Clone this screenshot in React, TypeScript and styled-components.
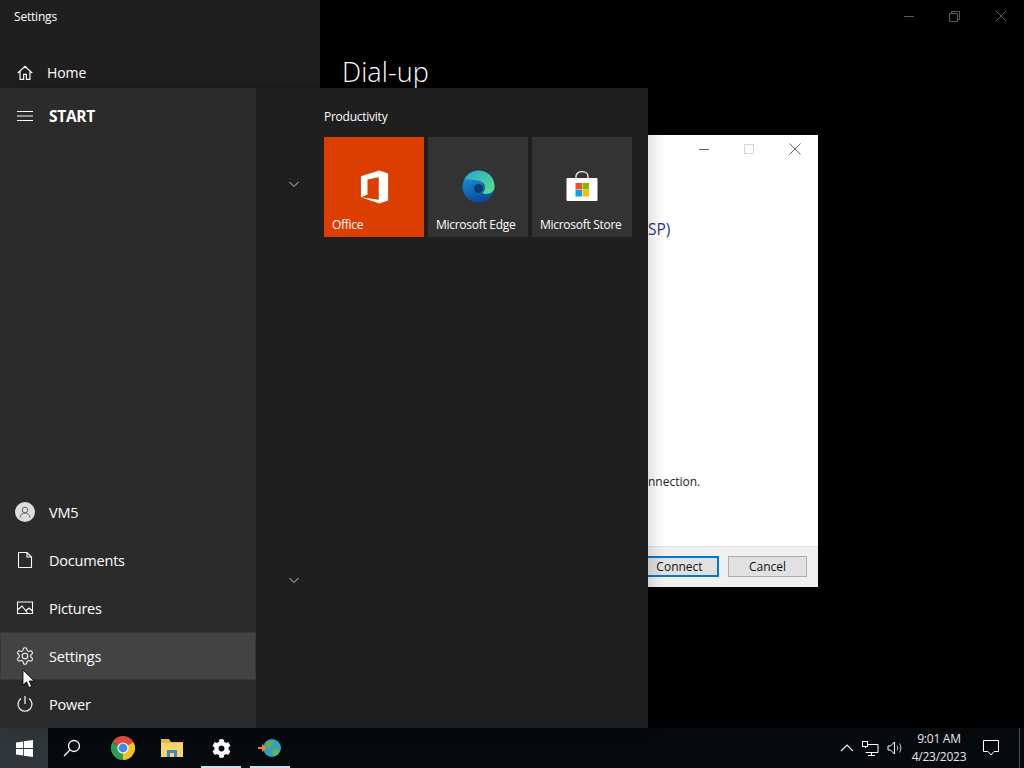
import React from "react";
import styled, { createGlobalStyle } from "styled-components";
import { FaCog } from "react-icons/fa";

const Global = createGlobalStyle`
  html, body { margin: 0; padding: 0; background: #000; overflow: hidden; }
  * { box-sizing: border-box; }
  body { font-family: "Open Sans", "Noto Sans", "Liberation Sans", sans-serif; }
`;

const Screen = styled.div`
  width: 1024px; height: 768px; display: flex; flex-direction: column; background: #000; overflow: hidden;
`;
const Stage = styled.div`
  position: relative; flex: 1; min-height: 0;
`;
const SettingsWindow = styled.div`
  position: absolute; inset: 0; display: grid; grid-template-columns: 320px 1fr;
`;
const SettingsSide = styled.div`
  background: #1f1f1f; color: #fff; display: flex; flex-direction: column;
`;
const SettingsTitle = styled.div`
  height: 33px; display: flex; align-items: center; padding-left: 14px; font-size: 12px; letter-spacing: -0.2px;
`;
const HomeRow = styled.div`
  height: 47px; margin-top: 16px; padding: 0 0 0 16px; display: flex; align-items: center; gap: 13px; font-size: 14px;
  letter-spacing: -0.1px;
`;
const SettingsMain = styled.div`
  background: #000; color: #fff; display: flex; flex-direction: column; padding-left: 22px;
`;
const Caption = styled.div`
  height: 32px; display: flex; justify-content: flex-end; align-items: center; gap: 30px; padding-right: 15px;
`;
const CaptionBtn = styled.svg`
  width: 16px; height: 16px; display: block; color: #5e5e5e;
`;
const Heading = styled.h1`
  margin: 22px 0 0; font-size: 27px; line-height: 36px; font-weight: 300; letter-spacing: 0.1px;
`;

const Dialog = styled.div`
  position: absolute; left: 600px; top: 135px; width: 218px; height: 452px; background: #fff;
  display: flex; flex-direction: column; color: #222;
`;
const DialogCaption = styled.div`
  height: 28px; display: flex; justify-content: flex-end; align-items: center; gap: 29px; padding-right: 15px;
`;
const DialogBtn = styled.svg`
  width: 16px; height: 16px; display: block; color: ${(p: { $dim?: boolean }) => (p.$dim ? "#d6d6d6" : "#666")};
`;
const DialogBody = styled.div`
  flex: 1; display: flex; flex-direction: column; justify-content: space-between; padding: 54px 0 55px 48px;
`;
const SpText = styled.div`
  font-size: 15.5px; line-height: 24px; color: #2a3c7c;
`;
const NoteText = styled.div`
  font-size: 12px; line-height: 18px; color: #222;
`;
const DialogFooter = styled.div`
  height: 41px; background: #f0f0f0; border-top: 1px solid #dfdfdf; display: flex; justify-content: flex-end;
  align-items: center; gap: 9px; padding: 0 11px 2px 0;
`;
const DlgButton = styled.button<{ $primary?: boolean }>`
  width: 79px; height: 21px; padding: 0; font: 12px "Open Sans", "Noto Sans", sans-serif; color: #111;
  background: #e1e1e1; border: ${(p) => (p.$primary ? "2px solid #0078d7" : "1px solid #adadad")};
`;

const StartMenu = styled.div`
  position: absolute; left: 0; top: 88px; width: 648px; height: 640px; display: grid;
  grid-template-columns: 256px 68px 1fr; background: #1f1f1f; color: #fff;
  box-shadow: 4px 0 14px rgba(0, 0, 0, 0.16);
`;
const Rail = styled.div`
  background: #2b2b2b; display: flex; flex-direction: column; justify-content: space-between;
`;
const RailHeader = styled.div`
  height: 56px; display: flex; align-items: center; gap: 16px; padding-left: 17px; font-size: 15.5px; font-weight: 700;
  letter-spacing: -0.3px;
`;
const RailList = styled.div`
  display: flex; flex-direction: column;
`;
const RailItem = styled.div<{ $active?: boolean }>`
  height: 48px; display: flex; align-items: center; padding-left: 15px; gap: 14px; font-size: 14.5px; color: #fff;
  letter-spacing: -0.2px;
  ${(p) => (p.$active ? "background:#434343; box-shadow: inset 0 0 0 1px #383838;" : "")}
`;
const RailIcon = styled.svg`
  width: 20px; height: 20px; display: block; flex: none;
`;
const Avatar = styled.div`
  width: 20px; height: 20px; border-radius: 50%; background: #dcdcdc; color: #555; display: flex;
  align-items: center; justify-content: center; flex: none;
`;
const ChevColumn = styled.div`
  position: relative; padding: 91px 0 0 32px; display: flex; flex-direction: column; gap: 386px;
`;
const Chev = styled.svg`
  width: 12px; height: 10px; display: block; color: #cfcfcf;
`;
const TilesPane = styled.div`
  padding: 20px 0 0; display: flex; flex-direction: column;
`;
const GroupLabel = styled.div`
  font-size: 12px; line-height: 18px; height: 29px; color: #fff; letter-spacing: -0.25px;
`;
const Tiles = styled.div`
  display: flex; gap: 4px;
`;
const Tile = styled.div<{ $bg: string }>`
  position: relative; width: 100px; height: 100px; background: ${(p) => p.$bg}; display: flex; flex-direction: column;
  align-items: center; padding: 33px 0 0;
`;
const TileLabel = styled.div`
  position: absolute; left: 8px; bottom: 3px; font-size: 12px; line-height: 18px; white-space: nowrap; letter-spacing: -0.28px;
`;

const Taskbar = styled.div`
  height: 40px; background: #060a0d; display: flex; align-items: center; color: #fff; flex: none;
`;
const TaskStart = styled.div`
  width: 48px; height: 40px; background: #2f3538; display: flex; align-items: center; justify-content: center;
`;
const TaskSearch = styled.div`
  width: 51px; height: 40px; padding-right: 3px; display: flex; align-items: center; justify-content: center;
`;
const TaskApp = styled.div<{ $active?: boolean }>`
  position: relative; width: 49px; height: 40px; padding-right: 1px; display: flex; align-items: center; justify-content: center;
  ${(p) => (p.$active ? `&::after{content:"";position:absolute;left:4px;right:5px;bottom:0;height:2px;background:#bfe6f5;}` : "")}
`;
const Tray = styled.div`
  margin-left: auto; display: flex; align-items: center; height: 40px;
`;
const TrayIcon = styled.svg`
  display: block; color: #fff;
`;
const Clock = styled.div`
  width: 68px; margin-left: 2px; text-align: center; font-size: 12px; line-height: 18px; color: #e8e8e8; letter-spacing: -0.25px;
`;
const Notif = styled.div`
  width: 46px; display: flex; justify-content: center; padding-right: 10px;
`;
const ShowDesktop = styled.div`
  width: 5px; height: 40px; border-left: 1px solid #4a4f52;
`;
const Cursor = styled.svg`
  position: absolute; left: 22px; top: 669px; width: 13px; height: 20px;
`;

const line = { fill: "none", stroke: "currentColor", strokeWidth: 1 } as const;

const Gear = () => (
  <RailIcon viewBox="0 0 24 24" fill="none" stroke="#fff" strokeWidth="1.25">
    <path d="M12.2 2h-.4a2 2 0 0 0-2 2v.2a2 2 0 0 1-1 1.7l-.4.3a2 2 0 0 1-2 0l-.2-.1a2 2 0 0 0-2.7.7l-.2.4a2 2 0 0 0 .7 2.7l.2.1a2 2 0 0 1 1 1.7v.5a2 2 0 0 1-1 1.7l-.2.1a2 2 0 0 0-.7 2.7l.2.4a2 2 0 0 0 2.7.7l.2-.1a2 2 0 0 1 2 0l.4.3a2 2 0 0 1 1 1.7v.2a2 2 0 0 0 2 2h.4a2 2 0 0 0 2-2v-.2a2 2 0 0 1 1-1.7l.4-.3a2 2 0 0 1 2 0l.2.1a2 2 0 0 0 2.7-.7l.2-.4a2 2 0 0 0-.7-2.7l-.2-.1a2 2 0 0 1-1-1.7v-.5a2 2 0 0 1 1-1.7l.2-.1a2 2 0 0 0 .7-2.7l-.2-.4a2 2 0 0 0-2.7-.7l-.2.1a2 2 0 0 1-2 0l-.4-.3a2 2 0 0 1-1-1.7V4a2 2 0 0 0-2-2z" />
    <circle cx="12" cy="12" r="3.4" />
  </RailIcon>
);

const ChevDown = () => (
  <Chev viewBox="0 0 12 10"><path d="M1.5 3 L6 7.5 L10.5 3" {...line} /></Chev>
);

export default function App() {
  return (
    <>
      <Global />
      <Screen>
        <Stage>
          <SettingsWindow>
            <SettingsSide>
              <SettingsTitle>Settings</SettingsTitle>
              <HomeRow>
                <RailIcon viewBox="0 0 20 20" style={{ width: 18, height: 18 }}>
                  <path d="M2 10 L10 2.5 L18 10 M4.5 8 V17 H8.5 V11.5 H11.5 V17 H15.5 V8" fill="none" stroke="#fff" strokeWidth="1.3" />
                </RailIcon>
                Home
              </HomeRow>
            </SettingsSide>
            <SettingsMain>
              <Caption>
                <CaptionBtn viewBox="0 0 16 16"><path d="M3 8.5 H13" {...line} /></CaptionBtn>
                <CaptionBtn viewBox="0 0 16 16"><path d="M2.5 5.5 H10.5 V13.5 H2.5 Z M4.5 5.5 V3.5 H12.5 V11.5 H10.5" {...line} /></CaptionBtn>
                <CaptionBtn viewBox="0 0 16 16"><path d="M3 3 L13 13 M13 3 L3 13" {...line} /></CaptionBtn>
              </Caption>
              <Heading>Dial-up</Heading>
            </SettingsMain>
          </SettingsWindow>

          <Dialog>
            <DialogCaption>
              <DialogBtn viewBox="0 0 16 16"><path d="M2 8.5 H12" {...line} /></DialogBtn>
              <DialogBtn $dim viewBox="0 0 16 16"><rect x="2.5" y="3.5" width="9" height="9" {...line} /></DialogBtn>
              <DialogBtn viewBox="0 0 16 16"><path d="M2.5 2.5 L13.5 13.5 M13.5 2.5 L2.5 13.5" {...line} /></DialogBtn>
            </DialogCaption>
            <DialogBody>
              <SpText>SP)</SpText>
              <NoteText>nnection.</NoteText>
            </DialogBody>
            <DialogFooter>
              <DlgButton $primary>Connect</DlgButton>
              <DlgButton>Cancel</DlgButton>
            </DialogFooter>
          </Dialog>

          <StartMenu>
            <Rail>
              <RailHeader>
                <svg width="16" height="12" viewBox="0 0 16 12" style={{ display: "block" }}>
                  <path d="M0 1.5 H16 M0 6 H16 M0 10.5 H16" stroke="#fff" strokeWidth="1" fill="none" />
                </svg>
                START
              </RailHeader>
              <RailList>
                <RailItem>
                  <Avatar>
                    <svg width="12" height="12" viewBox="0 0 12 12" fill="none" stroke="#666" strokeWidth="1">
                      <circle cx="6" cy="4" r="2.8" />
                      <path d="M1 11.5 C1.5 8.5 3.5 7 6 7 C8.5 7 10.5 8.5 11 11.5" />
                    </svg>
                  </Avatar>
                  VM5
                </RailItem>
                <RailItem>
                  <RailIcon viewBox="0 0 20 20">
                    <path d="M3.5 2.5 H12 L16.5 7 V17.5 H3.5 Z M12 2.5 V7 H16.5" fill="none" stroke="#fff" strokeWidth="1.1" />
                  </RailIcon>
                  Documents
                </RailItem>
                <RailItem>
                  <RailIcon viewBox="0 0 20 20">
                    <path d="M2.5 4 H17.5 V15.5 H2.5 Z M2.5 12 L7 8 L12.5 15 M11 12.5 L14 10 L17.5 13" fill="none" stroke="#fff" strokeWidth="1.1" />
                  </RailIcon>
                  Pictures
                </RailItem>
                <RailItem $active>
                  <Gear />
                  Settings
                </RailItem>
                <RailItem>
                  <RailIcon viewBox="0 0 20 20">
                    <path d="M10 2 V10 M6 4.5 A7 7 0 1 0 14 4.5" fill="none" stroke="#fff" strokeWidth="1.2" />
                  </RailIcon>
                  Power
                </RailItem>
              </RailList>
            </Rail>
            <ChevColumn>
              <ChevDown />
              <ChevDown />
            </ChevColumn>
            <TilesPane>
              <GroupLabel>Productivity</GroupLabel>
              <Tiles>
                <Tile $bg="#dc3e00">
                  <svg width="30" height="34" viewBox="0 0 32 36" style={{ marginLeft: 2 }}>
                    <path fill="#fff" d="M1 6.5 L20.5 0.5 L30 3.5 V32.5 L20.5 35.5 L1 29 L20 31.5 V7.5 L8 10 V26 L1 29 Z" />
                  </svg>
                  <TileLabel>Office</TileLabel>
                </Tile>
                <Tile $bg="#333333">
                  <svg width="33" height="33" viewBox="0 0 34 34">
                    <defs>
                      <linearGradient id="edgeA" x1="0" y1="0" x2="0.3" y2="1">
                        <stop offset="0" stopColor="#1f9fe0" />
                        <stop offset="1" stopColor="#0a4da0" />
                      </linearGradient>
                      <linearGradient id="edgeB" x1="0" y1="0" x2="1" y2="1">
                        <stop offset="0" stopColor="#1fa9d8" />
                        <stop offset="1" stopColor="#62e07f" />
                      </linearGradient>
                    </defs>
                    <circle cx="17" cy="17" r="16.5" fill="url(#edgeA)" />
                    <path d="M3 9 C7 1 17 -1 24 2 C31 5 34 12 33.5 18 C33 23 27 26 21 24 C25 20 25 14 20 12 C13 9 6 11 3 9 Z" fill="url(#edgeB)" />
                    <circle cx="17" cy="19" r="4.6" fill="#0c3c70" />
                  </svg>
                  <TileLabel>Microsoft Edge</TileLabel>
                </Tile>
                <Tile $bg="#333333">
                  <svg width="32" height="34" viewBox="0 0 32 34">
                    <path d="M10 10 V6.5 C10 0 22 0 22 6.5 V10" fill="none" stroke="#e8e8e8" strokeWidth="1.4" />
                    <rect x="0.5" y="8" width="31" height="23" rx="1" fill="#fff" />
                    <rect x="9.5" y="13" width="6.5" height="6.5" fill="#f25022" />
                    <rect x="16.5" y="13" width="6.5" height="6.5" fill="#7fba00" />
                    <rect x="9.5" y="20" width="6.5" height="6.5" fill="#00a4ef" />
                    <rect x="16.5" y="20" width="6.5" height="6.5" fill="#ffb900" />
                  </svg>
                  <TileLabel>Microsoft Store</TileLabel>
                </Tile>
              </Tiles>
            </TilesPane>
          </StartMenu>

          <Cursor viewBox="0 0 13 20">
            <path d="M1 1 V16 L4.6 12.8 L7 18.5 L9.6 17.4 L7.2 12 H12 Z" fill="#fff" stroke="#000" strokeWidth="0.8" />
          </Cursor>
        </Stage>

        <Taskbar>
          <TaskStart>
            <svg width="17" height="17" viewBox="0 0 17 17">
              <path fill="#fff" d="M0 2.4 L7.2 1.4 V8 H0 Z M8 1.3 L17 0 V8 H8 Z M0 9 H7.2 V15.6 L0 14.6 Z M8 9 H17 V17 L8 15.7 Z" />
            </svg>
          </TaskStart>
          <TaskSearch>
            <svg width="18" height="18" viewBox="0 0 18 18" fill="none" stroke="#fff" strokeWidth="1.3">
              <circle cx="11" cy="7" r="5.5" />
              <path d="M7 11 L1 17" />
            </svg>
          </TaskSearch>
          <TaskApp>
            <svg width="24" height="24" viewBox="0 0 24 24">
              <path d="M12 12 L22.4 6 A12 12 0 0 0 1.6 6 Z" fill="#dd4b3d" />
              <path d="M12 12 L1.6 6 A12 12 0 0 0 12 24 Z" fill="#2e9e4f" />
              <path d="M12 12 L12 24 A12 12 0 0 0 22.4 6 Z" fill="#f7c221" />
              <circle cx="12" cy="12" r="5.6" fill="#fff" />
              <circle cx="12" cy="12" r="4.4" fill="#4285f4" />
            </svg>
          </TaskApp>
          <TaskApp>
            <svg width="22" height="18" viewBox="0 0 22 18">
              <path d="M0 0 H8 L10 3 H22 V18 H0 Z" fill="#e9b93f" />
              <rect x="0" y="4" width="22" height="14" fill="#f7d568" />
              <rect x="6" y="11" width="10" height="7" fill="#3f86c6" />
              <rect x="9" y="14" width="4" height="4" fill="#f7d568" />
            </svg>
          </TaskApp>
          <TaskApp $active>
            <FaCog size={19} color="#fff" />
          </TaskApp>
          <TaskApp $active>
            <svg width="24" height="22" viewBox="0 0 24 22">
              <circle cx="14" cy="11" r="9" fill="#2f9fc7" />
              <path d="M9 5 C12 3 15 4 16 6 C15 9 12 8 12 11 C10 12 8 10 9 5 Z M15 12 C18 11 21 12 22 14 C20 18 17 19 15 19 C14 17 15 14 15 12 Z" fill="#63b346" />
              <path d="M0 10 H4 V7 L9 11 L4 15 V12 H0 Z" fill="#f07d28" />
            </svg>
          </TaskApp>
          <Tray>
            <TrayIcon width="14" height="8" viewBox="0 0 14 8" style={{ marginRight: 8 }}>
              <path d="M1 7 L7 1 L13 7" fill="none" stroke="#fff" strokeWidth="1.1" />
            </TrayIcon>
            <TrayIcon width="17" height="15" viewBox="0 0 17 15" style={{ marginRight: 8 }}>
              <path d="M3.5 3.5 H16 V11.5 H3.5 M9.5 11.5 V14 M6 14.5 H13 M3.5 3.5 V7" fill="none" stroke="#fff" strokeWidth="1" />
              <rect x="0.5" y="0.5" width="5" height="5" fill="#060a0d" stroke="#fff" />
            </TrayIcon>
            <TrayIcon width="16" height="14" viewBox="0 0 16 14">
              <path d="M1 5 H3.5 L7.5 1 V13 L3.5 9 H1 Z" fill="none" stroke="#fff" strokeWidth="1" />
              <path d="M10 4.5 C11 6 11 8 10 9.5 M12.5 2.5 C14.3 5 14.3 9 12.5 11.5" fill="none" stroke="#cfcfcf" strokeWidth="1" />
            </TrayIcon>
            <Clock>
              <div>9:01 AM</div>
              <div>4/23/2023</div>
            </Clock>
            <Notif>
              <svg width="16" height="16" viewBox="0 0 16 16">
                <path d="M0.5 0.5 H15.5 V11.5 H11 L8 15 L5 11.5 H0.5 Z" fill="none" stroke="#fff" strokeWidth="1" />
              </svg>
            </Notif>
            <ShowDesktop />
          </Tray>
        </Taskbar>
      </Screen>
    </>
  );
}
